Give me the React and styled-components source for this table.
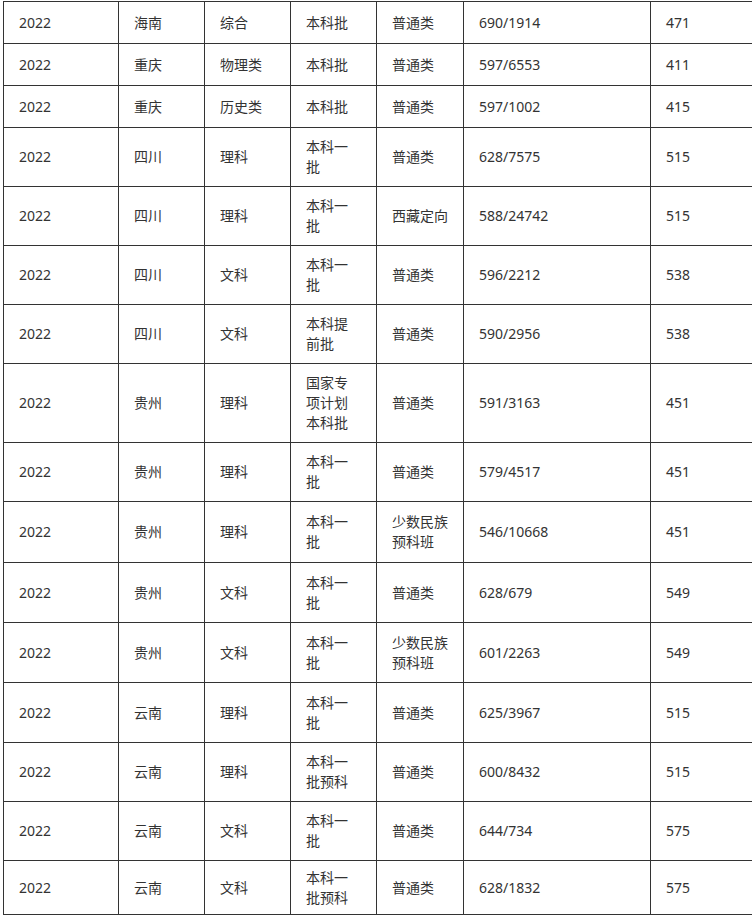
import React from "react";
import styled, { createGlobalStyle } from "styled-components";

const Global = createGlobalStyle`
  html, body { margin: 0; padding: 0; background: #fff; overflow: hidden; }
  body { font-family: "Noto Sans", "Noto Sans CJK SC", sans-serif; }
`;

const Page = styled.div`
  width: 752px;
  height: 915px;
  overflow: hidden;
  padding: 1px 0 0 3px;
  box-sizing: border-box;
  background: #fff;
`;

const Table = styled.table`
  border-collapse: collapse;
  table-layout: fixed;
  width: 900px;
  color: #333;
  font-size: 14px;
  font-family: "Noto Sans", "Noto Sans CJK SC", sans-serif;
`;

const Row = styled.tr`
  height: ${(p) => p.$h}px;
`;

const Cell = styled.td`
  border: 1px solid #333;
  padding: 0 15px;
  line-height: 20px;
  vertical-align: middle;
  white-space: nowrap;
  text-align: left;
`;

const Line = styled.div`
  display: block;
`;

const BottomStrip = styled.div`
  height: 2px;
  background: #ececec;
  width: 752px;
`;

const widths = [115, 86, 86, 86, 87, 187, 253];

const rows = [
  [42, "海南", "综合", ["本科批"], ["普通类"], "690/1914", "471"],
  [42, "重庆", "物理类", ["本科批"], ["普通类"], "597/6553", "411"],
  [42, "重庆", "历史类", ["本科批"], ["普通类"], "597/1002", "415"],
  [59, "四川", "理科", ["本科一", "批"], ["普通类"], "628/7575", "515"],
  [59, "四川", "理科", ["本科一", "批"], ["西藏定向"], "588/24742", "515"],
  [59, "四川", "文科", ["本科一", "批"], ["普通类"], "596/2212", "538"],
  [59, "四川", "文科", ["本科提", "前批"], ["普通类"], "590/2956", "538"],
  [79, "贵州", "理科", ["国家专", "项计划", "本科批"], ["普通类"], "591/3163", "451"],
  [59, "贵州", "理科", ["本科一", "批"], ["普通类"], "579/4517", "451"],
  [61, "贵州", "理科", ["本科一", "批"], ["少数民族", "预科班"], "546/10668", "451"],
  [60, "贵州", "文科", ["本科一", "批"], ["普通类"], "628/679", "549"],
  [60, "贵州", "文科", ["本科一", "批"], ["少数民族", "预科班"], "601/2263", "549"],
  [60, "云南", "理科", ["本科一", "批"], ["普通类"], "625/3967", "515"],
  [59, "云南", "理科", ["本科一", "批预科"], ["普通类"], "600/8432", "515"],
  [59, "云南", "文科", ["本科一", "批"], ["普通类"], "644/734", "575"],
  [54, "云南", "文科", ["本科一", "批预科"], ["普通类"], "628/1832", "575"],
];

const Lines = ({ items }) =>
  items.map((t, i) => <Line key={i}>{t}</Line>);

export default function App() {
  return (
    <>
      <Global />
      <Page>
        <Table>
          <colgroup>
            {widths.map((w, i) => (
              <col key={i} style={{ width: w }} />
            ))}
          </colgroup>
          <tbody>
            {rows.map((r, i) => (
              <Row key={i} $h={r[0]}>
                <Cell>2022</Cell>
                <Cell>{r[1]}</Cell>
                <Cell>{r[2]}</Cell>
                <Cell>
                  <Lines items={r[3]} />
                </Cell>
                <Cell>
                  <Lines items={r[4]} />
                </Cell>
                <Cell>{r[5]}</Cell>
                <Cell>{r[6]}</Cell>
              </Row>
            ))}
          </tbody>
        </Table>
        <BottomStrip />
      </Page>
    </>
  );
}
